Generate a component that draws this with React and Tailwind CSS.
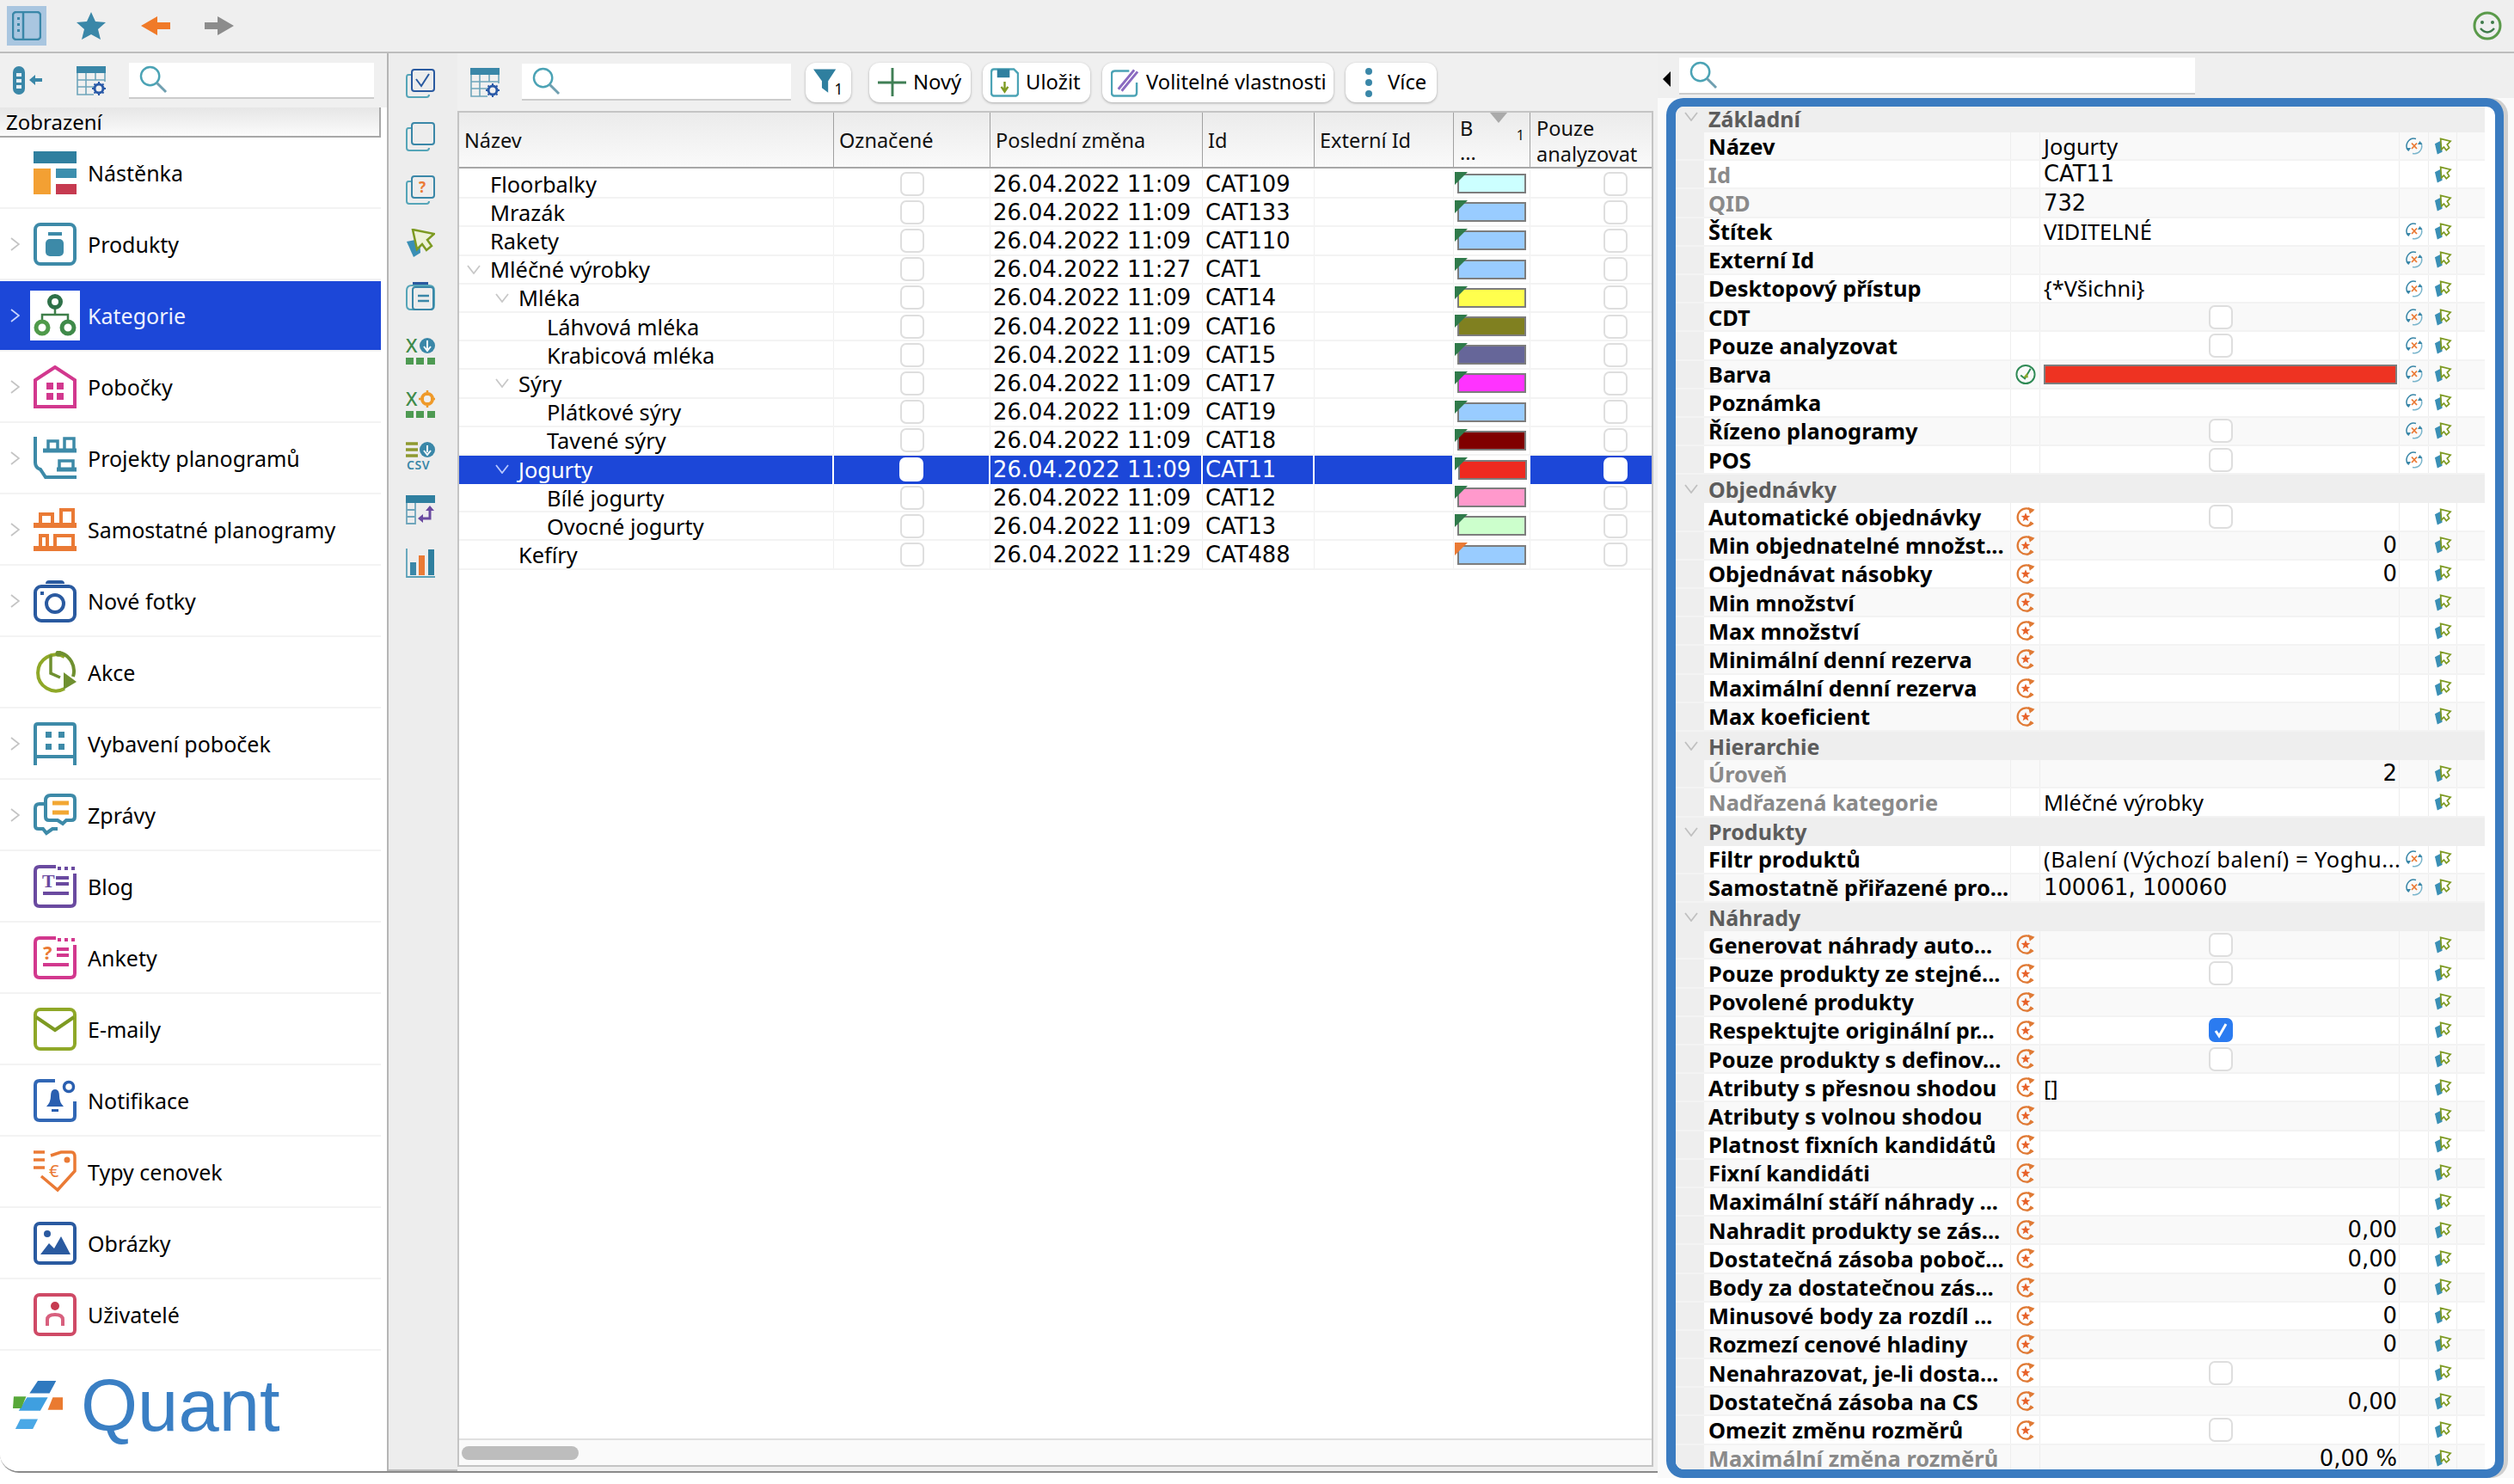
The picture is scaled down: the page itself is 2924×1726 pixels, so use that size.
import React from 'react';

const digitFont = "font-['DejaVu_Sans',sans-serif] text-[25.8px]";

const TEAL = '#3a87a8';

// malé ikony
const SearchIcon = () => (
  <svg viewBox="0 0 34 34" className="w-[33px] h-[33px] shrink-0" fill="none">
    <circle cx="13" cy="13" r="11" stroke="#4ba3b5" strokeWidth="2.5" />
    <path d="M21 21L32 32" stroke="#6f9fb0" strokeWidth="3" />
  </svg>
);

const TableGear = () => (
  <svg viewBox="0 0 34 34" className="w-[34px] h-[34px]" fill="none">
    <rect x="0" y="0" width="34" height="8" fill={TEAL} />
    <path d="M1 8V33H20M1 16H33M1 24H20M11 8V33M22 8V16M33 8V18" stroke="#6ea5bb" strokeWidth="1.6" />
    <circle cx="26" cy="26" r="5" stroke="#2a5aa8" strokeWidth="3" />
    <path d="M26 18V21M26 31V34M18 26H21M31 26H34M20.500 20.500L22.500 22.500M29.500 29.500L31.500 31.500M20.500 31.500L22.500 29.500M29.500 22.500L31.500 20.500" stroke="#2a5aa8" strokeWidth="2" />
  </svg>
);

const Pin = () => (
  <svg viewBox="0 0 22 20" className="w-[21px] h-[20px]">
    <path d="M1 7L9 3L10 17L4 20Z" fill="#3a8fb5" />
    <path d="M8 1L20 4L16 8L18.500 12L15 15L12 11L9 14Z" fill="#fff" stroke="#7d9a22" strokeWidth="1.800" />
  </svg>
);

const ResetX = () => (
  <svg viewBox="0 0 20 20" className="w-[20px] h-[20px]" fill="none">
    <path d="M3 15A8.500 8.500 0 0 1 12 1.500" stroke="#3a87a8" strokeWidth="1.500" />
    <path d="M17.500 6A8.500 8.500 0 0 1 8 18.500" stroke="#7ab5cc" strokeWidth="1.500" />
    <path d="M0.500 12L3.500 16L6 12ZM19.500 8L16.500 4L14 8Z" fill="#3a87a8" />
    <path d="M7 6.500L13 13M13 6.500L7 13" stroke="#ea7a35" strokeWidth="1.800" />
  </svg>
);

const ResetStar = () => (
  <svg viewBox="0 0 24 26" className="w-[24px] h-[25px]" fill="none">
    <path d="M20.600 6A10.500 10.500 0 1 0 20.600 20" stroke="#e07a35" strokeWidth="2.400" />
    <path d="M15 1L23 4L17 9Z" fill="#e07a35" />
    <path d="M22 21L13 25.500L18 18Z" fill="#e07a35" />
    <path d="M12 7.500L13.500 11.300L17.500 11.500L14.300 14L15.500 18L12 15.800L8.500 18L9.700 14L6.500 11.500L10.500 11.300Z" fill="#e8622a" />
  </svg>
);

const ResetCheck = () => (
  <svg viewBox="0 0 24 26" className="w-[24px] h-[25px]" fill="none">
    <circle cx="12" cy="13" r="11" stroke="#2f8a55" strokeWidth="2" />
    <path d="M6 14L11 18L18 6" stroke="#2f8a55" strokeWidth="2" />
    <path d="M9 17L14 11L15 17Z" fill="#8aa82a" />
  </svg>
);

const ChevronRight = ({ color = '#c4c4c4' }) => (
  <svg viewBox="0 0 11 16" className="w-[11px] h-[16px]" fill="none">
    <path d="M1 1L10 8L1 15" stroke={color} strokeWidth="1.800" />
  </svg>
);

const ChevronDown = ({ color = '#c8c8c8', className = '' }) => (
  <svg viewBox="0 0 16 11" className={`w-[16px] h-[11px] ${className}`} fill="none">
    <path d="M1 1L8 10L15 1" stroke={color} strokeWidth="1.800" />
  </svg>
);

const Checkbox = ({ checked, selected }) => (
  <div className={`w-[28px] h-[28px] rounded-[7px] flex items-center justify-center border-2 ${checked ? 'bg-[#2b7bf0] border-[#2b7bf0]' : selected ? 'bg-white border-white' : 'bg-white border-[#dedede]'}`}>
    {checked && (
      <svg viewBox="0 0 20 20" className="w-[20px] h-[20px]" fill="none">
        <path d="M4 11L8 17L16 3" stroke="#fff" strokeWidth="3" />
      </svg>
    )}
  </div>
);

// ikony bočního menu, 50x50
const Ic = ({ children }) => (
  <svg viewBox="0 0 50 50" className="w-[50px] h-[50px]" fill="none">
    {children}
  </svg>
);

const sideIcons = {
  dash: (
    <Ic>
      <rect x="0" y="0" width="50" height="14" fill="#2f7f9f" />
      <rect x="0" y="20" width="20" height="30" fill="#f3a033" />
      <rect x="26" y="20" width="24" height="11" fill="#3d8fae" />
      <rect x="26" y="38" width="24" height="12" fill="#c63a50" />
    </Ic>
  ),
  prod: (
    <Ic>
      <rect x="2" y="2" width="46" height="46" rx="6" stroke="#3d8aa8" strokeWidth="4" />
      <rect x="17" y="11" width="16" height="4" fill="#3d8aa8" />
      <rect x="14" y="19" width="21" height="20" rx="5" fill="#3d8aa8" />
    </Ic>
  ),
  cat: (
    <Ic>
      <path d="M25 16V24M10 32V24H40V32" stroke="#3f7f4a" strokeWidth="2.500" />
      <circle cx="25" cy="9" r="6.500" stroke="#2d7048" strokeWidth="5" />
      <circle cx="10" cy="39" r="7" stroke="#4f9a4a" strokeWidth="5" />
      <circle cx="40" cy="39" r="7" stroke="#3f8a4a" strokeWidth="5" />
    </Ic>
  ),
  shop: (
    <Ic>
      <path d="M2 48V17L25 2L48 17V48Z" stroke="#d2388e" strokeWidth="4" />
      <path d="M15 20h8v8h-8zM27 20h8v8h-8zM15 32h8v8h-8zM27 32h8v8h-8z" fill="#d2388e" />
    </Ic>
  ),
  proj: (
    <Ic>
      <path d="M2 0V30Q2 36 8 38L14 47H50" stroke="#3d8aa8" strokeWidth="4" />
      <path d="M11 16H50M27 38H50" stroke="#3d8aa8" strokeWidth="5" />
      <path d="M17 14V5H28V14M36 14V2H47V14M30 36V28H46V36" stroke="#3d8aa8" strokeWidth="3.500" />
    </Ic>
  ),
  plano: (
    <Ic>
      <path d="M0 20H50M0 47H50" stroke="#ea7a35" strokeWidth="6" />
      <path d="M8 18V7H22V18M32 18V2H46V18M8 45V32H16V45M25 45V32H46V45" stroke="#ea7a35" strokeWidth="4" />
    </Ic>
  ),
  photo: (
    <Ic>
      <rect x="2" y="8" width="46" height="40" rx="7" stroke="#2a5aa0" strokeWidth="4" />
      <path d="M14 5Q14 1 18 1H32Q36 1 36 5Z" fill="#2a5aa0" />
      <circle cx="25" cy="28" r="10" stroke="#2a5aa0" strokeWidth="4" />
      <rect x="8" y="14" width="4" height="4" fill="#2a5aa0" />
    </Ic>
  ),
  action: (
    <Ic>
      <path d="M36 7A21 21 0 1 0 36 44" stroke="#8fa828" strokeWidth="4" />
      <path d="M30 2A22 22 0 0 1 46 30" stroke="#6f9030" strokeWidth="4" />
      <path d="M20 5V26L31 31" stroke="#6f9030" strokeWidth="3.500" />
      <path d="M35 25L50 36L35 45Z" fill="#6f9030" />
      <circle cx="29" cy="3" r="3.500" fill="#6f9030" />
    </Ic>
  ),
  equip: (
    <Ic>
      <path d="M2 50V5Q2 2 5 2H45Q48 2 48 5V50M2 40H48" stroke="#3d8aa8" strokeWidth="4" />
      <path d="M14 11h7v7h-7zM29 11h7v7h-7zM14 25h7v7h-7zM29 25h7v7h-7z" fill="#3d8aa8" />
    </Ic>
  ),
  msg: (
    <Ic>
      <path d="M12 12H7Q2 12 2 17V38Q2 41 6 41H11L15 46L22 41H28" stroke="#3d8aa8" strokeWidth="4" />
      <path d="M20 2H43Q48 2 48 7V27Q48 31 44 31H38L34 35L28 31H18Q14 31 14 27V8Q14 2 20 2Z" stroke="#3d8aa8" strokeWidth="4" />
      <path d="M22 11H41M22 22H41" stroke="#f2a733" strokeWidth="5" />
    </Ic>
  ),
  blog: (
    <Ic>
      <path d="M26 2H7Q2 2 2 7V43Q2 48 7 48H43Q48 48 48 43V10" stroke="#6a4aa0" strokeWidth="4" />
      <path d="M28 2h4v4h-4zM36 2h4v4h-4zM44 2h4v4h-4z" fill="#6a4aa0" />
      <text x="10" y="26" fontFamily="Liberation Serif" fontWeight="700" fontSize="22" fill="#6a4aa0">T</text>
      <path d="M26 15H41M26 22H41M11 33H41" stroke="#6a4aa0" strokeWidth="4" />
    </Ic>
  ),
  poll: (
    <Ic>
      <path d="M26 2H7Q2 2 2 7V43Q2 48 7 48H43Q48 48 48 43V10" stroke="#d2388e" strokeWidth="4" />
      <path d="M28 2h4v4h-4zM36 2h4v4h-4zM44 2h4v4h-4z" fill="#d2388e" />
      <text x="11" y="27" fontFamily="Noto Sans" fontWeight="700" fontSize="22" fill="#ea7a35">?</text>
      <path d="M27 15H41M27 22H41M11 33H41" stroke="#d2388e" strokeWidth="4" />
    </Ic>
  ),
  mail: (
    <Ic>
      <rect x="2" y="2" width="46" height="46" rx="6" stroke="#8fa828" strokeWidth="4" />
      <path d="M3 11L25 26L47 11" stroke="#7d9a22" strokeWidth="4" />
    </Ic>
  ),
  notify: (
    <Ic>
      <path d="M25 2H7Q2 2 2 7V43Q2 48 7 48H43Q48 48 48 43V26" stroke="#3167b5" strokeWidth="4" />
      <path d="M15 32Q20 27 20 20Q20 12 25 12Q30 12 30 20Q30 27 35 32Z" fill="#2a5fb0" />
      <rect x="21" y="35" width="8" height="3" fill="#2a5fb0" />
      <circle cx="41" cy="9" r="5.500" stroke="#2a5fb0" strokeWidth="3.500" />
    </Ic>
  ),
  price: (
    <Ic>
      <path d="M0 2H13M0 11H13M0 20H13" stroke="#ea7a35" strokeWidth="3.500" />
      <path d="M20 6L32 2H44Q48 2 48 8V24L28 46L9 30" stroke="#ea7a35" strokeWidth="3.500" />
      <text x="18" y="31" fontFamily="Noto Sans" fontSize="20" fill="#ea7a35">€</text>
      <circle cx="39" cy="11" r="3.500" fill="#ea7a35" />
    </Ic>
  ),
  image: (
    <Ic>
      <rect x="2" y="2" width="46" height="46" rx="5" stroke="#2a5aa0" strokeWidth="4" />
      <path d="M8 38L18 25L24 31L32 17L43 38Z" fill="#2a5aa0" />
      <circle cx="16" cy="14" r="4" fill="#2a5aa0" />
    </Ic>
  ),
  user: (
    <Ic>
      <rect x="2" y="2" width="46" height="46" rx="5" stroke="#cf4a66" strokeWidth="4" />
      <circle cx="25" cy="15" r="5" fill="#c63a50" />
      <path d="M16 38V31Q16 25 25 25Q34 25 34 31V38" stroke="#d8607e" strokeWidth="4" />
    </Ic>
  ),
};

const menuItems = [
  { label: 'Nástěnka', icon: 'dash' },
  { label: 'Produkty', icon: 'prod', arrow: true },
  { label: 'Kategorie', icon: 'cat', arrow: true, active: true },
  { label: 'Pobočky', icon: 'shop', arrow: true },
  { label: 'Projekty planogramů', icon: 'proj', arrow: true },
  { label: 'Samostatné planogramy', icon: 'plano', arrow: true },
  { label: 'Nové fotky', icon: 'photo', arrow: true },
  { label: 'Akce', icon: 'action' },
  { label: 'Vybavení poboček', icon: 'equip', arrow: true },
  { label: 'Zprávy', icon: 'msg', arrow: true },
  { label: 'Blog', icon: 'blog' },
  { label: 'Ankety', icon: 'poll' },
  { label: 'E-maily', icon: 'mail' },
  { label: 'Notifikace', icon: 'notify' },
  { label: 'Typy cenovek', icon: 'price' },
  { label: 'Obrázky', icon: 'image' },
  { label: 'Uživatelé', icon: 'user' },
];

const Sidebar = () => (
  <div className="w-[452px] shrink-0 bg-white border-r-2 border-[#b5b5b5] flex flex-col">
    <div className="h-[63px] bg-[#f0f0f0] flex items-center pl-[15px]">
      <svg viewBox="0 0 34 34" className="w-[34px] h-[34px]">
        <rect x="0" y="0" width="14" height="33" rx="7" fill="#3a87a8" />
        <path d="M4 8h6v4H4zM4 15h6v4H4zM4 22h6v4H4z" fill="#e8f0f4" />
        <path d="M19 16L26 10V14H34V18H26V22Z" fill="#3a87a8" />
      </svg>
      <div className="ml-[40px]">
        <TableGear />
      </div>
      <div className="ml-[27px] w-[285px] h-[42px] bg-white border-b-2 border-[#ccc] flex items-center pl-[12px]">
        <SearchIcon />
      </div>
    </div>
    <div className="h-[35px] w-[443px] bg-linear-to-b from-[#e6e6e6] to-[#fbfbfb] border-b-2 border-r-2 border-[#a8a8a8] flex items-center pl-[7px] text-[24px] text-black">
      Zobrazení
    </div>
    <div className="w-[443px] flex flex-col">
      {menuItems.map((m) => (
        <div key={m.label} className="h-[83px] border-b-2 border-[#f3f3f3]">
          <div className={`h-[80px] mt-[1px] flex items-center ${m.active ? 'bg-[#1c47d8] text-[#eef2ff]' : 'text-black'}`}>
            <div className="w-[35px] pl-[12px] shrink-0">
              {m.arrow && <ChevronRight color={m.active ? '#c8d4ff' : '#c4c4c4'} />}
            </div>
            <div className={`w-[58px] h-[58px] shrink-0 flex items-center justify-center ${m.active ? 'bg-white' : ''}`}>
              {sideIcons[m.icon]}
            </div>
            <span className="ml-[9px] pt-[2px] text-[25px] whitespace-nowrap">{m.label}</span>
          </div>
        </div>
      ))}
    </div>
    <div className="pt-[32px] pl-[15px] flex items-center">
      <svg viewBox="0 0 60 60" className="w-[58px] h-[58px]">
        <path d="M30 0H52L44 15H20Z" fill="#2f79bf" />
        <path d="M17 20H42L33 36H7Z" fill="#3f9fe0" />
        <path d="M1 19H16L10 33H0Z" fill="#58a83a" />
        <path d="M48 20H60V35H42Z" fill="#ea7a30" />
        <path d="M9 46H30L24 58H3Z" fill="#4aa8e6" />
      </svg>
      <span className="ml-[21px] font-['Liberation_Sans',sans-serif] text-[85px] leading-[64px] text-[#3a7fc4]">Quant</span>
    </div>
  </div>
);

const stripIcons = [
  <svg key="a" viewBox="0 0 34 34" className="w-[34px] h-[34px]" fill="none">
    <rect x="7" y="1" width="26" height="25" rx="3" stroke="#2a5aa0" strokeWidth="2" />
    <path d="M12 12L18 20L27 6" stroke="#2a5aa0" strokeWidth="2" />
    <path d="M6 7H3Q1 7 1 10V30Q1 33 4 33H24Q27 33 27 30" stroke="#55a5b8" strokeWidth="2" />
  </svg>,
  <svg key="b" viewBox="0 0 34 34" className="w-[34px] h-[34px]" fill="none">
    <rect x="7" y="1" width="26" height="25" rx="3" stroke="#3a87a8" strokeWidth="2" />
    <path d="M6 7H3Q1 7 1 10V30Q1 33 4 33H24Q27 33 27 30" stroke="#55a5b8" strokeWidth="2" />
  </svg>,
  <svg key="c" viewBox="0 0 34 34" className="w-[34px] h-[34px]" fill="none">
    <rect x="7" y="1" width="26" height="25" rx="3" stroke="#3a87a8" strokeWidth="2" />
    <text x="15" y="20" fontFamily="Noto Sans" fontWeight="700" fontSize="17" fill="#ea7a35">?</text>
    <path d="M6 7H3Q1 7 1 10V30Q1 33 4 33H24Q27 33 27 30" stroke="#55a5b8" strokeWidth="2" />
  </svg>,
  <svg key="d" viewBox="0 0 34 34" className="w-[34px] h-[34px]">
    <path d="M1 15L16 12L17 28L9 33Z" fill="#3a8fb5" />
    <path d="M8 1L33 6L25 13L30 20L24 25L19 18L13 24Z" fill="#eef2d8" stroke="#7d9a22" strokeWidth="2.500" />
  </svg>,
  <svg key="e" viewBox="0 0 34 34" className="w-[34px] h-[34px]" fill="none">
    <rect x="8" y="0" width="18" height="3" fill="#2a5aa0" />
    <path d="M7 4H27Q33 4 33 10V27Q33 32 28 32H6Q1 32 1 27V10Q1 4 7 4Z" stroke="#55a5b8" strokeWidth="2" />
    <rect x="8" y="6" width="24" height="26" rx="3" stroke="#3a87a8" strokeWidth="2" />
    <path d="M14 16H27M14 22H27" stroke="#3a87a8" strokeWidth="2.500" />
  </svg>,
  <svg key="f" viewBox="0 0 34 34" className="w-[34px] h-[34px] overflow-visible">
    <text x="0" y="20" fontFamily="Noto Sans" fontWeight="500" fontSize="22" fill="#3e8a4a">X</text>
    <circle cx="25" cy="12" r="9" fill="#3a87a8" />
    <path d="M25 6V16M21 13L25 18L29 13" stroke="#fff" strokeWidth="2" fill="none" />
    <path d="M0 26h9v8h-9zM12 26h9v8h-9zM25 26h9v8h-9z" fill="#4e9a52" />
  </svg>,
  <svg key="g" viewBox="0 0 34 34" className="w-[34px] h-[34px] overflow-visible">
    <text x="0" y="20" fontFamily="Noto Sans" fontWeight="500" fontSize="22" fill="#3e8a4a">X</text>
    <circle cx="25" cy="12" r="6" fill="none" stroke="#ef9a2a" strokeWidth="4" />
    <path d="M25 2V22M15 12H34" stroke="#ef9a2a" strokeWidth="2.500" />
    <circle cx="25" cy="12" r="4" fill="#f0f0f0" />
    <path d="M0 26h9v8h-9zM12 26h9v8h-9zM25 26h9v8h-9z" fill="#4e9a52" />
  </svg>,
  <svg key="h" viewBox="0 0 34 34" className="w-[34px] h-[34px] overflow-visible">
    <path d="M0 2H14M0 9H14M0 16H14" stroke="#8f9a30" strokeWidth="3.500" />
    <circle cx="25" cy="9" r="9" fill="#3a87a8" />
    <path d="M25 4V12M21 10L25 15L29 10" stroke="#fff" strokeWidth="2" fill="none" />
    <text x="1" y="32" fontFamily="Noto Sans" fontWeight="600" fontSize="14" letterSpacing="0.500" fill="#3a87a8">CSV</text>
  </svg>,
  <svg key="i" viewBox="0 0 34 34" className="w-[34px] h-[34px]" fill="none">
    <rect x="0" y="0" width="34" height="9" fill="#2f7f9f" />
    <path d="M1 9V33H11V9M1 17H11M1 25H11" stroke="#6ea5bb" strokeWidth="1.800" />
    <path d="M28 14V27H18" stroke="#6a4aa0" strokeWidth="3" />
    <path d="M23 18L28 12L33 18ZM20 22L14 27L20 32Z" fill="#6a4aa0" />
  </svg>,
  <svg key="j" viewBox="0 0 34 34" className="w-[34px] h-[34px]">
    <rect x="5" y="16" width="7" height="15" fill="#3a87a8" />
    <rect x="15" y="8" width="7" height="23" fill="#ea7a35" />
    <rect x="26" y="1" width="7" height="30" fill="#2f7f9f" />
    <path d="M1 0V33H34" stroke="#5aa0b8" strokeWidth="1.800" fill="none" />
  </svg>,
];

const IconStrip = () => (
  <div className="w-[80px] shrink-0 bg-[#ededed] flex flex-col items-center pt-[18px] gap-[28px] pr-[6px] border-b-2 border-[#bbb]">
    {stripIcons}
  </div>
);

const ToolButton = ({ children, className = '' }) => (
  <div className={`h-[46px] bg-white rounded-[12px] shadow-[0_1px_3px_rgba(0,0,0,0.3)] flex items-center text-[23.8px] text-black ${className}`}>
    {children}
  </div>
);

const Toolbar = () => (
  <div className="h-[67px] shrink-0 flex items-center">
    <div className="ml-[15px]">
      <TableGear />
    </div>
    <div className="ml-[26px] w-[313px] h-[43px] bg-white border-b-2 border-[#ccc] flex items-center pl-[12px]">
      <SearchIcon />
    </div>
    <ToolButton className="ml-[17px] w-[53px] pl-[9px]">
      <svg viewBox="0 0 42 34" className="w-[38px] h-[34px] overflow-visible">
        <path d="M0 0H29L19 15V30L11 24V15Z" fill="#2f7f9f" />
        <text x="27" y="33" fontFamily="Noto Sans" fontSize="19" fill="#000">1</text>
      </svg>
    </ToolButton>
    <ToolButton className="ml-[21px] w-[118px] pl-[10px] gap-[8px]">
      <svg viewBox="0 0 34 34" className="w-[33px] h-[33px]">
        <path d="M16 0h3v34h-3zM0 16h34v3H0z" fill="#3f7f55" />
      </svg>
      Nový
    </ToolButton>
    <ToolButton className="ml-[14px] w-[125px] pl-[9px] gap-[8px]">
      <svg viewBox="0 0 34 34" className="w-[33px] h-[34px]" fill="none">
        <path d="M4 1H28L33 6V29Q33 33 29 33H5Q1 33 1 29V5Q1 1 4 1Z" stroke="#4ba3b5" strokeWidth="2.500" />
        <rect x="8" y="1" width="15" height="10" fill="#2f7f9f" />
        <path d="M17 16V26M13 22L17 28L21 22" stroke="#7d9a22" strokeWidth="2.500" />
      </svg>
      Uložit
    </ToolButton>
    <ToolButton className="ml-[14px] w-[269px] pl-[10px] gap-[8px]">
      <svg viewBox="0 0 34 34" className="w-[33px] h-[34px]" fill="none">
        <path d="M22 3H5Q1 3 1 7V29Q1 33 5 33H27Q31 33 31 29V17" stroke="#4ba3b5" strokeWidth="2.500" />
        <path d="M9 25L28 2M13 27L32 4" stroke="#8a6ac0" strokeWidth="3" />
      </svg>
      Volitelné vlastnosti
    </ToolButton>
    <ToolButton className="ml-[14px] w-[106px] pl-[23px] gap-[18px]">
      <svg viewBox="0 0 8 34" className="w-[8px] h-[34px]" fill={TEAL}>
        <circle cx="4" cy="4" r="4" />
        <circle cx="4" cy="17" r="4" />
        <circle cx="4" cy="30" r="4" />
      </svg>
      Více
    </ToolButton>
  </div>
);

const gridCols = 'grid grid-cols-[436px_182px_247px_130px_162px_89px_1fr]';

const tableRows = [
  { n: 'Floorbalky', d: 0, t: '26.04.2022 11:09', id: 'CAT109', c: 'bg-[#ccffff]' },
  { n: 'Mrazák', d: 0, t: '26.04.2022 11:09', id: 'CAT133', c: 'bg-[#99ccff]' },
  { n: 'Rakety', d: 0, t: '26.04.2022 11:09', id: 'CAT110', c: 'bg-[#99ccff]' },
  { n: 'Mléčné výrobky', d: 0, open: true, t: '26.04.2022 11:27', id: 'CAT1', c: 'bg-[#99ccff]' },
  { n: 'Mléka', d: 1, open: true, t: '26.04.2022 11:09', id: 'CAT14', c: 'bg-[#ffff4d]' },
  { n: 'Láhvová mléka', d: 2, t: '26.04.2022 11:09', id: 'CAT16', c: 'bg-[#808020]' },
  { n: 'Krabicová mléka', d: 2, t: '26.04.2022 11:09', id: 'CAT15', c: 'bg-[#666699]' },
  { n: 'Sýry', d: 1, open: true, t: '26.04.2022 11:09', id: 'CAT17', c: 'bg-[#ff33ff]' },
  { n: 'Plátkové sýry', d: 2, t: '26.04.2022 11:09', id: 'CAT19', c: 'bg-[#99ccff]' },
  { n: 'Tavené sýry', d: 2, t: '26.04.2022 11:09', id: 'CAT18', c: 'bg-[#800000]' },
  { n: 'Jogurty', d: 1, open: true, sel: true, t: '26.04.2022 11:09', id: 'CAT11', c: 'bg-[#ee2a20]' },
  { n: 'Bílé jogurty', d: 2, t: '26.04.2022 11:09', id: 'CAT12', c: 'bg-[#ff99cc]' },
  { n: 'Ovocné jogurty', d: 2, t: '26.04.2022 11:09', id: 'CAT13', c: 'bg-[#ccffcc]' },
  { n: 'Kefíry', d: 1, t: '26.04.2022 11:29', id: 'CAT488', c: 'bg-[#99ccff]', orange: true },
];

const indent = ['pl-[36px]', 'pl-[69px]', 'pl-[102px]'];
const chevronLeft = ['left-[9px]', 'left-[42px]', 'left-[75px]'];

const HeadCell = ({ children, className = '' }) => (
  <div className={`border-r border-[#a0a0a0] flex items-center pl-[6px] pt-[2px] ${className}`}>{children}</div>
);

const CategoryTable = () => (
  <div className="flex-1 min-h-0 mr-[5px] border-2 border-[#c4c4c4] bg-white flex flex-col">
    <div className={`${gridCols} h-[65px] shrink-0 border-b-2 border-[#a8a8a8] bg-linear-to-b from-[#ebebeb] to-[#fafafa] text-[23.5px] text-[#111]`}>
      <HeadCell>Název</HeadCell>
      <HeadCell>Označené</HeadCell>
      <HeadCell>Poslední změna</HeadCell>
      <HeadCell>Id</HeadCell>
      <HeadCell>Externí Id</HeadCell>
      <div className="relative border-r border-[#a0a0a0] pl-[7px] leading-[28px] pt-[4px]">
        <div>B</div>
        <div>...</div>
        <svg viewBox="0 0 20 12" className="absolute top-0 left-[42px] w-[20px] h-[12px]">
          <path d="M0 0H20L10 12Z" fill="#aaa" />
        </svg>
        <span className="absolute top-[16px] right-[6px] text-[16px] leading-[20px]">1</span>
      </div>
      <div className="pl-[7px] leading-[30px] pt-[3px]">
        <div>Pouze</div>
        <div>analyzovat</div>
      </div>
    </div>
    <div className="flex-1 min-h-0 pt-[2px]">
      {tableRows.map((r) => (
        <div key={r.id} className={`${gridCols} h-[33.2px] text-[25.4px] leading-[30px] ${r.sel ? 'bg-[#1c47d8] text-white' : 'text-black border-b-2 border-[#f3f3f3]'}`}>
          <div className={`relative whitespace-nowrap flex items-center ${indent[r.d]} ${r.sel ? 'border-r-2 border-white' : 'border-r border-[#f0f0f0]'}`}>
            {r.open && (
              <ChevronDown color={r.sel ? '#b8c8ff' : '#c8c8c8'} className={`absolute top-[10px] ${chevronLeft[r.d]}`} />
            )}
            {r.n}
          </div>
          <div className={`flex items-center justify-center ${r.sel ? 'border-r-2 border-white' : 'border-r border-[#f0f0f0]'}`}>
            <Checkbox selected={r.sel} />
          </div>
          <div className={`${digitFont} flex items-center whitespace-nowrap pl-[3px] ${r.sel ? 'border-r-2 border-white' : 'border-r border-[#f0f0f0]'}`}>{r.t}</div>
          <div className={`${digitFont} flex items-center pl-[3px] ${r.sel ? 'border-r-2 border-white' : 'border-r border-[#f0f0f0]'}`}>{r.id}</div>
          <div className={r.sel ? 'border-r-2 border-white' : 'border-r border-[#f0f0f0]'} />
          <div className={`relative flex items-center justify-center ${r.sel ? 'bg-white' : 'border-r border-[#f0f0f0]'}`}>
            <div className={`w-[80px] h-[23px] border-2 border-[#7d7d7d] ${r.c}`} />
            <svg viewBox="0 0 14 14" className="absolute top-[2px] left-[1px] w-[15px] h-[15px]">
              <path d="M0 0H14L0 14Z" fill={r.orange ? '#ea7a35' : '#2f7a4a'} />
            </svg>
          </div>
          <div className="flex items-center justify-center pl-[56px]">
            <Checkbox selected={r.sel} />
          </div>
        </div>
      ))}
    </div>
    <div className="h-[31px] shrink-0 border-t-2 border-[#e0e0e0] bg-[#fafafa] flex items-center pl-[3px]">
      <div className="w-[136px] h-[16px] rounded-[8px] bg-[#bdbdbd]" />
    </div>
  </div>
);

const rst = true;
const propRows = [
  { section: 'Základní' },
  { l: 'Název', v: 'Jogurty', r: rst },
  { l: 'Id', g: 1, v: 'CAT11', dv: 1 },
  { l: 'QID', g: 1, v: '732', dv: 1 },
  { l: 'Štítek', v: 'VIDITELNÉ', r: rst },
  { l: 'Externí Id', r: rst },
  { l: 'Desktopový přístup', v: '{*Všichni}', r: rst },
  { l: 'CDT', cb: 1, r: rst },
  { l: 'Pouze analyzovat', cb: 1, r: rst },
  { l: 'Barva', i: 'g', color: 1, r: rst },
  { l: 'Poznámka', r: rst },
  { l: 'Řízeno planogramy', cb: 1, r: rst },
  { l: 'POS', cb: 1, r: rst },
  { section: 'Objednávky' },
  { l: 'Automatické objednávky', i: 'o', cb: 1 },
  { l: 'Min objednatelné množst...', i: 'o', n: '0' },
  { l: 'Objednávat násobky', i: 'o', n: '0' },
  { l: 'Min množství', i: 'o' },
  { l: 'Max množství', i: 'o' },
  { l: 'Minimální denní rezerva', i: 'o' },
  { l: 'Maximální denní rezerva', i: 'o' },
  { l: 'Max koeficient', i: 'o' },
  { section: 'Hierarchie' },
  { l: 'Úroveň', g: 1, n: '2' },
  { l: 'Nadřazená kategorie', g: 1, v: 'Mléčné výrobky' },
  { section: 'Produkty' },
  { l: 'Filtr produktů', v: '(Balení (Výchozí balení) = Yoghu...', wide: 1, r: rst },
  { l: 'Samostatně přiřazené pro...', v: '100061, 100060', dv: 1, r: rst },
  { section: 'Náhrady' },
  { l: 'Generovat náhrady auto...', i: 'o', cb: 1 },
  { l: 'Pouze produkty ze stejné...', i: 'o', cb: 1 },
  { l: 'Povolené produkty', i: 'o' },
  { l: 'Respektujte originální pr...', i: 'o', cb: 2 },
  { l: 'Pouze produkty s definov...', i: 'o', cb: 1 },
  { l: 'Atributy s přesnou shodou', i: 'o', v: '[]' },
  { l: 'Atributy s volnou shodou', i: 'o' },
  { l: 'Platnost fixních kandidátů', i: 'o' },
  { l: 'Fixní kandidáti', i: 'o' },
  { l: 'Maximální stáří náhrady ...', i: 'o' },
  { l: 'Nahradit produkty se zás...', i: 'o', n: '0,00' },
  { l: 'Dostatečná zásoba poboč...', i: 'o', n: '0,00' },
  { l: 'Body za dostatečnou zás...', i: 'o', n: '0' },
  { l: 'Minusové body za rozdíl ...', i: 'o', n: '0' },
  { l: 'Rozmezí cenové hladiny', i: 'o', n: '0' },
  { l: 'Nenahrazovat, je-li dosta...', i: 'o', cb: 1 },
  { l: 'Dostatečná zásoba na CS', i: 'o', n: '0,00' },
  { l: 'Omezit změnu rozměrů', i: 'o', cb: 1 },
  { l: 'Maximální změna rozměrů', g: 1, n: '0,00 %' },
];

const PropRow = ({ row, odd }) => {
  if (row.section) {
    const first = row.section === 'Základní';
    return (
      <div className={`${first ? 'h-[30px] items-start' : 'h-[33.2px] items-center'} bg-[#eeeeee] flex text-[25px] leading-[28px] font-bold text-[#5c5c5c] whitespace-nowrap`}>
        <div className={`w-[38px] pl-[10px] shrink-0 ${first ? 'pt-[6px]' : 'flex items-center'}`}>
          <ChevronDown color="#c0c0c0" />
        </div>
        {row.section}
      </div>
    );
  }
  return (
    <div className={`h-[33.2px] flex border-b-2 border-[#f3f3f3] text-[25.4px] ${odd ? 'bg-[#f9f9f9]' : 'bg-white'}`}>
      <div className="w-[33px] shrink-0 bg-[#eeeeee]" />
      <div className={`w-[357px] shrink-0 pl-[5px] flex items-center font-bold whitespace-nowrap border-r border-[#eee] ${row.g ? 'text-[#8a8a8a]' : 'text-black'}`}>{row.l}</div>
      <div className="w-[34px] shrink-0 flex items-center justify-center border-r border-[#eee]">
        {row.i === 'o' && <ResetStar />}
        {row.i === 'g' && <ResetCheck />}
      </div>
      <div className="w-[418px] shrink-0 flex items-center border-r border-[#eee] pl-[4px] pr-[2px] text-black whitespace-nowrap">
        {row.v && <span className={`${row.dv ? digitFont : ''} ${row.wide ? 'tracking-[0.55px]' : ''}`}>{row.v}</span>}
        {row.n && <span className={`ml-auto ${digitFont}`}>{row.n}</span>}
        {row.cb && (
          <div className="w-full flex justify-center">
            <Checkbox checked={row.cb === 2} />
          </div>
        )}
        {row.color && <div className="w-full h-[23px] bg-[#ee3322] border-2 border-[#7d7d7d]" />}
      </div>
      <div className="w-[34px] shrink-0 flex items-center justify-center border-r border-[#eee]">
        {row.r && <ResetX />}
      </div>
      <div className="w-[33px] shrink-0 flex items-center justify-center border-r border-[#eee]">
        <Pin />
      </div>
      <div className="flex-1" />
    </div>
  );
};

const PropertyPanel = () => (
  <div className="w-[996px] shrink-0 bg-[#efefef] flex flex-col relative h-[1657px]">
    <svg viewBox="0 0 10 20" className="absolute left-[6px] top-[20px] w-[9px] h-[20px]">
      <path d="M10 0V20L0 10Z" fill="#000" />
    </svg>
    <div className="h-[52px] shrink-0 pl-[25px] flex items-center">
      <div className="w-[600px] h-[43px] bg-white border-b-2 border-[#ccc] flex items-center pl-[12px]">
        <SearchIcon />
      </div>
    </div>
    <div className="flex-1 min-h-0 bg-[#fafafa] pl-[10px]">
      <div className="w-[974px] h-full rounded-[20px] border-[10px] border-l-[11px] border-[#3a7bc0] bg-white overflow-hidden shadow-[5px_0_0_#cfcfcf] pr-[12px]">
        {propRows.map((row, i) => (
          <PropRow key={row.section || row.l} row={row} odd={i % 2 === 1} />
        ))}
      </div>
    </div>
  </div>
);

export default function App() {
  return (
    <div className="w-[2924px] h-[1726px] bg-white overflow-hidden font-['Noto_Sans',sans-serif]">
      <div className="h-[62px] bg-[#efefef] border-b-2 border-[#bdbdbd] flex items-center">
        <div className="ml-[8px] w-[46px] h-[46px] bg-[#a9c6e0] flex items-center justify-center">
          <svg viewBox="0 0 34 34" className="w-[34px] h-[34px]" fill="none">
            <rect x="1" y="1" width="32" height="32" rx="4" stroke="#3a87a8" strokeWidth="2.500" />
            <path d="M13 1V33" stroke="#3a87a8" strokeWidth="2.500" />
            <path d="M6 7h3v3H6zM6 14h3v3H6zM6 21h3v3H6z" fill="#3a87a8" />
          </svg>
        </div>
        <svg viewBox="0 0 34 32" className="ml-[35px] w-[34px] h-[32px]">
          <path d="M17 0L22 11L34 12L25 20L28 32L17 26L6 32L9 20L0 12L12 11Z" fill="#3a87a8" />
        </svg>
        <svg viewBox="0 0 34 22" className="ml-[41px] w-[34px] h-[22px]">
          <path d="M0 11L19 0V7H34V15H19V22Z" fill="#f07a28" />
        </svg>
        <svg viewBox="0 0 34 22" className="ml-[40px] w-[34px] h-[22px]">
          <path d="M34 11L15 0V7H0V15H15V22Z" fill="#8c8c8c" />
        </svg>
        <svg viewBox="0 0 34 34" className="ml-auto mr-[14px] w-[34px] h-[34px]" fill="none">
          <circle cx="17" cy="17" r="15" stroke="#5a9a4a" strokeWidth="3" />
          <circle cx="11" cy="13" r="2" fill="#3e7a4a" />
          <circle cx="23" cy="13" r="2" fill="#3e7a4a" />
          <path d="M9 20Q17 29 25 20" stroke="#3e7a4a" strokeWidth="2.500" />
        </svg>
      </div>
      <div className="flex items-start">
        <div className="flex h-[1651px] border-b-2 border-[#8a8a8a] rounded-bl-[22px] overflow-hidden">
          <Sidebar />
          <div className="w-[1476px] shrink-0 bg-[#f0f0f0] flex">
            <IconStrip />
            <div className="flex-1 min-w-0 flex flex-col pb-[5px]">
              <Toolbar />
              <CategoryTable />
            </div>
          </div>
        </div>
        <PropertyPanel />
      </div>
    </div>
  );
}
